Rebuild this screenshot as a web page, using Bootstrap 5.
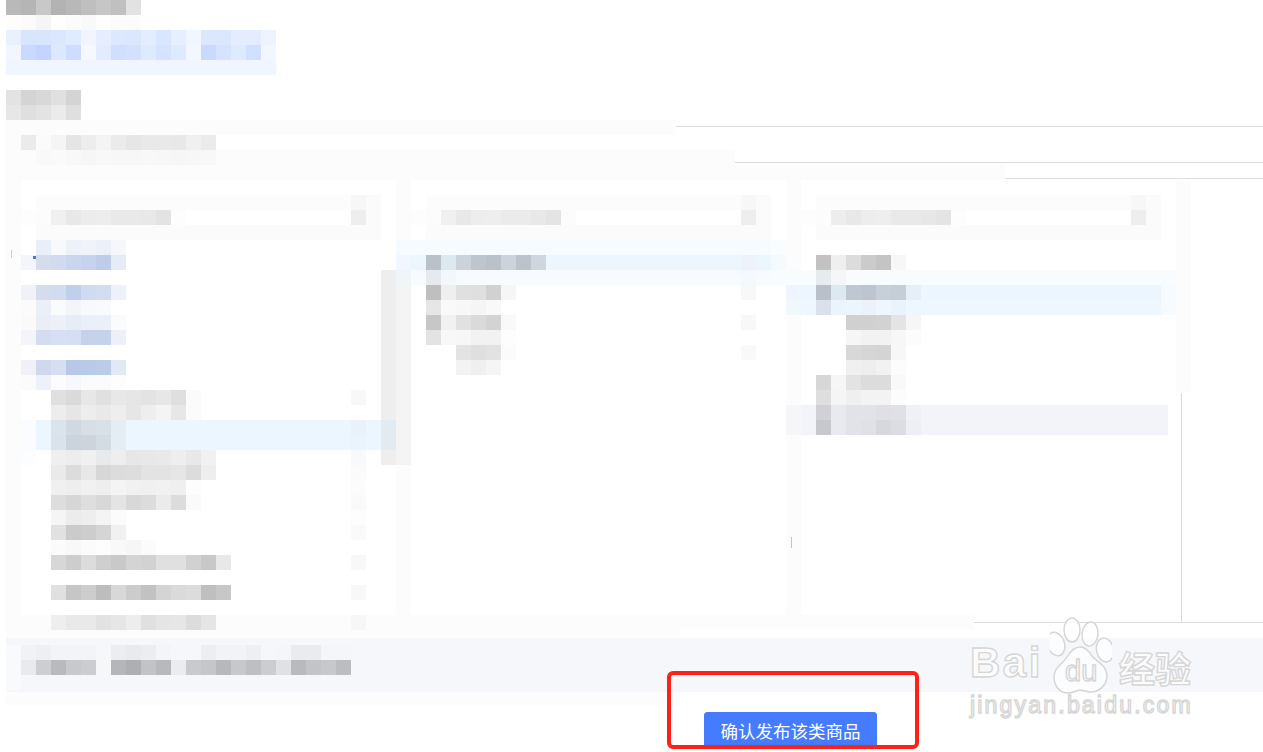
<!DOCTYPE html>
<html lang="zh-CN">
<head>
  <meta charset="UTF-8">
  <title>选择商品类目</title>
  <link href="https://cdn.jsdelivr.net/npm/bootstrap@5.3.2/dist/css/bootstrap.min.css" rel="stylesheet">
  <style>
    html, body { height: 752px; overflow: hidden; background: #fff; }
    body { font-family: "Liberation Sans", "Noto Sans CJK SC", sans-serif; }
    .sheet { height: 752px; padding-left: 6px; }
    .px-row { display: grid; grid-template-columns: repeat(84, 15px); grid-auto-rows: 15px; height: 15px; }
    .px-row > i { display: block; grid-row: 1; }
    .panel .px-row { grid-template-columns: repeat(26, 15px); }
    .panel { width: 390px; }
    .gap-row { height: 15px; }
    .notice-line { height: 15px; }
    .hair { height: 1px; background: #dcdcdc; flex-grow: 1; }
    .rule-foot { margin-top: 7px; }
    .panels { height: 435px; }
    .rail { width: 15px; }
    .rail-top { height: 213px; background: #fcfcfc; border-radius: 0 0 5px 5px; }
    .rail-line { height: 229px; width: 6px; border-right: 1px solid #d9d9d9; }
    .foot-top { height: 8px; width: 674px; background: #fcfcfc; }
    .foot-bar { height: 54px; background: #f6f7fa; padding-top: 7px; }
    .foot-low { height: 13px; width: 674px; background: #fcfcfc; }
    .publish-btn { margin: 7px 0 0 698px; width: 173px; height: 36px; padding: 0; border-radius: 3px; background: #457bff; border-color: #457bff; font-size: 17.5px; line-height: 36px; font-family: "Noto Sans CJK SC", sans-serif; }
    .red-mark { left: 667px; top: 671px; width: 252px; height: 78px; border: 4px solid #ff2018; border-radius: 6px; pointer-events: none; }
    .speck-line { left: 11px; top: 250px; width: 1px; height: 8px; background: #d0d0d0; }
    .speck-dot { left: 33px; top: 256px; width: 3px; height: 3px; background: #3f7fd0; }
    .speck-tick { left: 791px; top: 537px; width: 1px; height: 11px; background: #c4c4c4; }
    .wm { color: rgba(255, 255, 255, .7); -webkit-text-stroke: 1.4px #d6d6d6; line-height: 1; white-space: nowrap; }
    .wm-bai { left: 970px; top: 642px; font-size: 42px; font-weight: 700; letter-spacing: 2.5px; }
    .wm-du { left: 1065px; top: 657px; font-size: 29px; }
    .wm-cn { left: 1119px; top: 649px; font-size: 36px; font-family: "Noto Sans CJK SC", sans-serif; font-weight: 700; }
    .wm-url { left: 970px; top: 694px; font-size: 23px; letter-spacing: 2.2px; }
    .wm-paw { left: 1050px; top: 616px; }
  </style>
</head>
<body>

<div class="sheet position-relative">
  <div id="title"></div>
  <div id="tabs"></div>
  <div class="gap-row"></div>
  <div id="section"></div>

  <div id="notice"></div>

  <div class="panels d-flex">
    <div class="panel" id="panel1"></div>
    <div class="panel" id="panel2"></div>
    <div class="panel" id="panel3"></div>
    <div class="rail">
      <div class="rail-top"></div>
      <div class="rail-line"></div>
    </div>
  </div>

  <div class="d-flex align-items-start">
    <div id="lastRow"></div>
    <div class="hair rule-foot"></div>
  </div>

  <div class="foot-top"></div>
  <div class="foot-bar"><div id="footRows"></div></div>
  <div class="foot-low"></div>

  <button type="button" class="btn btn-primary publish-btn d-block text-white">确认发布该类商品</button>

  <!-- annotations and watermark on top of the screenshot -->
  <div class="position-absolute speck-line"></div>
  <div class="position-absolute speck-dot"></div>
  <div class="position-absolute speck-tick"></div>
  <div class="position-absolute red-mark"></div>

  <svg class="position-absolute wm-paw" width="62" height="80" viewBox="0 0 62 80" fill="rgba(255,255,255,.7)" stroke="#d6d6d6" stroke-width="1.5">
    <ellipse cx="22" cy="14" rx="8" ry="12"/>
    <ellipse cx="40" cy="18" rx="8" ry="12" transform="rotate(6 40 18)"/>
    <ellipse cx="6" cy="28" rx="8.5" ry="12" transform="rotate(-18 6 28)"/>
    <ellipse cx="55" cy="34" rx="8.5" ry="12" transform="rotate(-12 55 34)"/>
    <path d="M30 31c5 0 9 4 12 9 4 5 15 9 15 20 0 9-8 16-16 16-5 0-8-2-11-2s-7 3-12 3C9 77 4 69 4 61c0-10 9-13 13-20 3-5 8-10 13-10z"/>
  </svg>
  <div class="position-absolute wm wm-bai">Bai</div>
  <div class="position-absolute wm wm-du">du</div>
  <div class="position-absolute wm wm-cn">经验</div>
  <div class="position-absolute wm wm-url">jingyan.baidu.com</div>
</div>

<script>
// the page was pixelated in the source, so every block is a row of 15px cells
function rep(c, n) { return Array(n).fill(c).join(" "); }
function hex(c) {
  if (c.length === 2) return "#" + c + c + c;
  return "#" + c;
}

function addRow(parent, runs, bg, width) {
  const row = document.createElement("div");
  row.className = "px-row";
  if (bg) row.style.background = bg;
  if (width) row.style.width = width + "px";
  const cells = [];
  (runs || []).forEach(run => {
    run[1].split(" ").forEach((c, i) => { cells[run[0] + i] = c; });
  });
  let html = "";
  cells.forEach((c, i) => {
    const paint = c === "half" ? "linear-gradient(90deg,#f3f4f9 7px,#fff 7px)" : hex(c);
    html += `<i style="grid-column:${i + 1};background:${paint}"></i>`;
  });
  row.innerHTML = html;
  parent.appendChild(row);
}

const title = document.getElementById("title");
addRow(title, [[0, "b9 b5 c8 b3 b8 bf c6 c0 e2"]]);
addRow(title, [[0, "fd fb f5 ff fb f9 fe fc fc"]]);

const tabs = document.getElementById("tabs");
addRow(tabs, [[0, "e9f1ff d9e5ff d9e5ff dbe6ff e0ebff f1f5ff e6edff dde7ff dbe6ff e4ecff d9e6ff e6efff f2f6ff dbe7ff dbe7ff e4ecff e4ecff eef3ff"]]);
addRow(tabs, [[0, "f2f6ff c9d9ff c2d4ff dde7ff cddcff f5f8ff e3ecff d1dfff d3e1ff deebff d7e2ff ddeaff f3f7ff c9d9ff d6e3ff deebff d2e0ff f2f7ff"]]);
addRow(tabs, [[0, rep("f0f5ff", 18)]]);

const section = document.getElementById("section");
addRow(section, [[0, "e3 d4 d8 e0 d4"]]);
addRow(section, [[0, "e7 df e3 eb df"]]);

// notice lines, each one runs out into a hairline on the right
const notice = document.getElementById("notice");
function noticeLine(width, runs, hairTop) {
  const line = document.createElement("div");
  line.className = "notice-line d-flex";
  const left = document.createElement("div");
  addRow(left, runs, "#fcfcfc", width);
  line.appendChild(left);
  if (hairTop !== null) {
    const hair = document.createElement("div");
    hair.className = "hair";
    hair.style.marginTop = hairTop + "px";
    line.appendChild(hair);
  }
  notice.appendChild(line);
}
noticeLine(670, [], 6);
noticeLine(210, [[1, "ecebe9 f9fbfd f5 e5 ed f4 eb e6 e9 e9 e8 f0 eb"]], null);
noticeLine(729, [[2, "f9 fa f8 f6 f8 f7 f7 f8 f7 f6 f7 f8"]], 12);
noticeLine(999, [], 13);

// search box in the head of every column
function searchRows(first) {
  return {
    195: [[2, rep("fc", 21)], [23, "f7 fb"]],
    210: [[1, "fd fc"], [3, first], [23, "ee fb"]],
    225: [[2, rep("fb", 23)]]
  };
}

const p1 = Object.assign(searchRows("f0 e8 ec ed e9 e9 e8 e3 fd"), {
  240: [[2, "e9eff9 f7f9fd edf1fa f0f3fa ecf0f9 f5f7fc"]],
  255: [[1, "f4f5fa d4dcee d1daef c9d6ee c5d3ee bdcdea e6ecf7"]],
  285: [[1, "f1f2f7 d5dcee d2dcf0 c0cfeb cfdbf0 d4ddf0 edf1f9"]],
  300: [[1, "fb ebeff8 fafbfd f3f5fb f8f9fc f9fafd"]],
  315: [[1, "fa eaeef7 ecf0f8 e8ecf6 ebeff8 ebeff8 fafbfd"]],
  330: [[1, "f4f5f9 d6dcf0 d9dff2 d5dff1 c5d2ec c5d2ec edf0f9"]],
  360: [[1, "f0f1f6 cfd8ec d6def1 b8c8e8 b9c9e8 bccbe8 e3e8f5"]],
  375: [[1, "fb eef1fa fcfcfe f7f8fc fafbfd fbfbfd fdfdfe"]],
  390: [[3, "e0 da e7 e0 e8 e6 e3 e7 df fb"], [23, "f8"]],
  405: [[3, "ed e6 ed e9 ee e6 ee f4 e7 fb"]],
  420: [[1, "fafcff " + rep("ebf6fe", 23)], [3, "dbe4ec d0d8e1 d7dee6 d9e1e8 e4edf3"], [23, "e9f2fa"]],
  435: [[1, "fafcff " + rep("ebf6fe", 23)], [3, "dae3eb cbd3dc cdd4dc d3dbe3 e3edf3"], [23, "eaf4fc"]],
  450: [[1, "fcfdff"], [3, "ef ecedec eff0ef e8e9ea ee e6e7e6 e7e8e7 e9 ee e7e8e7 f1"], [23, "f8f9fb"]],
  465: [[3, "ea dc e8 d7 dc dd e3 e3 e6 dc ee"], [23, "fb"]],
  480: [[3, "f0 ee f1 ee f4 f1 f0 f1 ef fd"], [23, "fc"]],
  495: [[3, "dd d6 de d8 e4 d8 dc eb dc fa"], [23, "fa"]],
  510: [[3, "f5 ec ee f4 fb"], [23, "fd"]],
  525: [[3, "e1 cb cd d5 f1"], [23, "fa"]],
  540: [[3, "fb f8 fb fd f9 f6 fb"]],
  555: [[3, "d7 cd dc cf c9 d4 d2 e0 e0 d1 c8 e8"], [23, "f8"]],
  585: [[3, "e0 c6 cd bd d8 cc c2 d4 da dc bf c7"], [23, "f8"]]
});

const p2 = Object.assign(searchRows("f0 e8 ed ee eb eb e8 e4 fc"), {
  240: [[0, rep("f5fbff", 25) + " f9fdff"]],
  255: [[0, "f1f7ff " + rep("ebf6fe", 24) + " f5faff"], [2, "b9c2c9 dce9f0 cad2dc bdc5cf b9c1cb ccd3dd bbc3cd cfd6e0"], [23, "ecf3fb"]],
  270: [[0, "eff5f9 " + rep("f7fbff", 24) + " f9fcff"], [2, "e4eaee f1f7fb"], [23, "f4f9ff"]],
  285: [[2, "bf ef e0 df d1 f6"], [23, "f8"]],
  300: [[2, "e6 f9 f7 f5 f9"]],
  315: [[2, "c7 f1 e1 da d3 f9"], [23, "f8"]],
  330: [[2, "e3 f8 f7 f2 f2 fd"]],
  345: [[4, "e3 df e2 fb"], [23, "f9"]],
  360: [[4, "f3 ef f5"]]
});

const p3 = Object.assign(searchRows("ed e8 ed ee e9 e9 e7 e4 fd"), {
  255: [[2, "c2 ef dc cb c4 f7"]],
  270: [[0, rep("f8fcff", 26)], [2, "e6ebee f3f7fa"]],
  285: [[0, "eef5fe " + rep("ebf6fe", 24) + " f5fbff"], [2, "b9c0ca dce9f0 bfc8d2 bdc6d0 c7d0d9 c5ced7 e6eff8"]],
  300: [[0, "f1f8fc " + rep("eff7fe", 24) + " f7fbff"], [2, "dbe1ec ecf4fb ecf4fc edf1fa eff6fd eaf3fb eff7fe"]],
  315: [[4, "d0 d0 d2 e4 f6"]],
  330: [[4, "f6 f2 f2 f7 fc"]],
  345: [[4, "d8 d6 d4 f7"]],
  360: [[4, "f0 ee f2 fc"]],
  375: [[2, "d7 f6 e3 dc dc f9"]],
  390: [[2, "de f5 ef f3 f3 fc"]],
  405: [[0, "f6f6f9 " + rep("f3f4f9", 24) + " half"], [2, "d0d0d6 e9eaf0 e1e3e9 e1e3e8 dfdfe5 e0e1e7 f0f1f6"]],
  420: [[0, "f6f6f9 " + rep("f3f4f9", 24) + " half"], [2, "c7c8cc e9eaef e2e3e9 dfe1e7 d6d8dc dcdce2 eeeff4"]]
});

function fillPanel(id, data, scroll) {
  const box = document.getElementById(id);
  for (let y = 180; y < 615; y += 15) {
    const inBar = y >= 270 && y < 465;
    const edge = scroll === "edge" && inBar ? "f4" : "fc";
    const runs = [[0, edge]].concat(data[y] || []);
    if (scroll === "bar" && inBar) runs.push([25, y === 420 || y === 435 ? "e3eaf0" : "ee"]);
    addRow(box, runs);
  }
}
fillPanel("panel1", p1, "bar");
fillPanel("panel2", p2, "edge");
fillPanel("panel3", p3);

addRow(document.getElementById("lastRow"), [[3, "ee e9 e9 e2 e6 ed e0 e5 e6 dc e5"], [23, "f7"]], "#fcfcfc", 968);

const foot = document.getElementById("footRows");
addRow(foot, [[0, "f9fafc f1f2f5 eeeff2 f3f4f7 f3f4f7 f3f4f7 f6f7f9 ecedf0 e9eaed ecedf0 f4f5f8 f6f7f9 f6f7f9 edeef1 f2f3f6 f2f3f6 eeeff2 f6f7f9 f5f6f8 eaebee eaebee f5f6f8 f5f6f8"]]);
addRow(foot, [[0, "f9fafc e9eaed cdced1 b9babd c8c9cc cccdd0 f6f7f9 b5b6b9 aeafb2 c2c3c6 b8b9bc ebecef c9cacd c5c6c9 b7b8bb c7c8cb bebfc2 cccdd0 e0e1e4 b9babd c3c4c7 c7c8cb bcbdc0"]]);
addRow(foot, [[0, "f9fafc"]]);
</script>

<script src="https://cdn.jsdelivr.net/npm/bootstrap@5.3.2/dist/js/bootstrap.bundle.min.js"></script>
</body>
</html>
